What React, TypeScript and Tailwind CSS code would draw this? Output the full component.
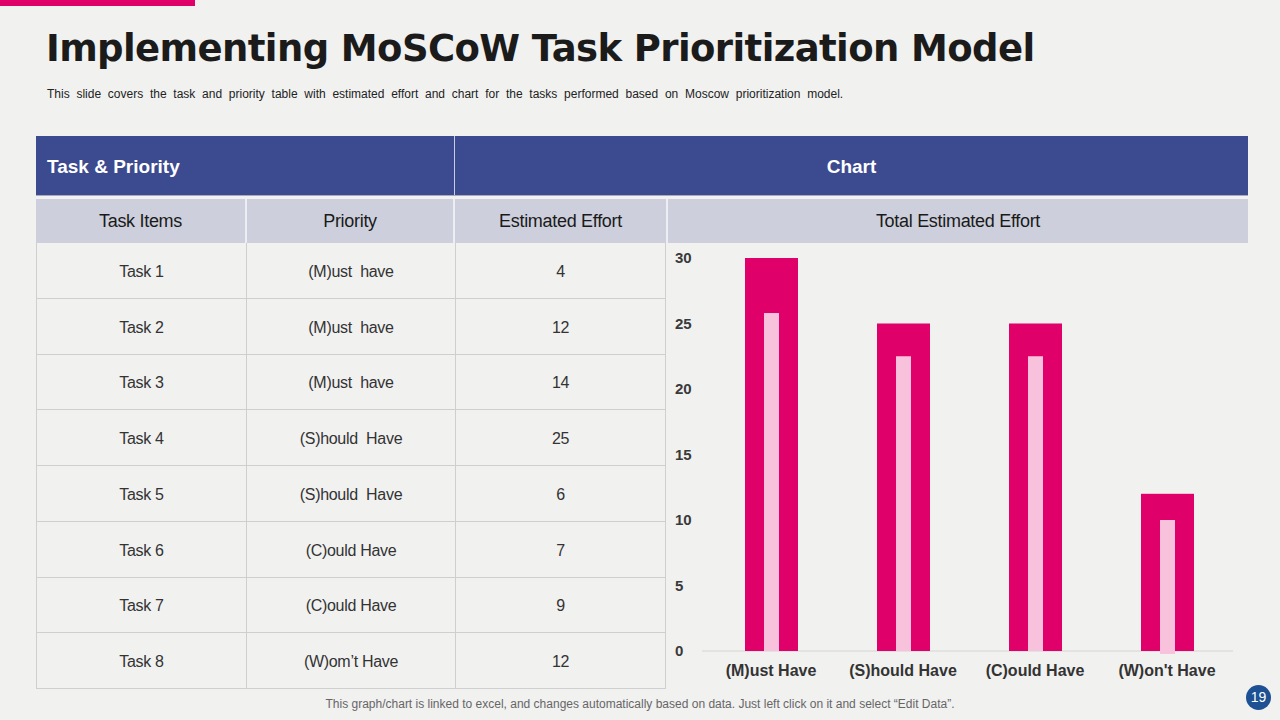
import React from 'react';

const rows = [
  { task: 'Task 1', priority: '(M)ust  have', effort: '4' },
  { task: 'Task 2', priority: '(M)ust  have', effort: '12' },
  { task: 'Task 3', priority: '(M)ust  have', effort: '14' },
  { task: 'Task 4', priority: '(S)hould  Have', effort: '25' },
  { task: 'Task 5', priority: '(S)hould  Have', effort: '6' },
  { task: 'Task 6', priority: '(C)ould Have', effort: '7' },
  { task: 'Task 7', priority: '(C)ould Have', effort: '9' },
  { task: 'Task 8', priority: '(W)om’t Have', effort: '12' },
];

// outer = total, inner = lighter series
const bars = [
  { label: '(M)ust Have', outer: 30, inner: 25.8 },
  { label: '(S)hould Have', outer: 25, inner: 22.5 },
  { label: '(C)ould Have', outer: 25, inner: 22.5 },
  { label: "(W)on't Have", outer: 12, inner: 10 },
];

function Chart() {
  // chart cell origin is x=668, y=243
  const y0 = 408; // baseline (651 - 243)
  const unit = 13.1;
  const ticks = [30, 25, 20, 15, 10, 5, 0];
  return (
    <svg width="580" height="447" className="block">
      {ticks.map((t) => (
        <text
          key={t}
          x={7}
          y={y0 - t * unit + 5}
          fontFamily="Liberation Sans, Arial, sans-serif"
          fontWeight="bold"
          fontSize="15"
          fill="#3a3a3a"
        >
          {t}
        </text>
      ))}
      <line x1={34} y1={y0} x2={565} y2={y0} stroke="#d4d4d4" strokeWidth="1" />
      {bars.map((b, i) => {
        const cx = 103 + i * 132;
        const oh = b.outer * unit;
        const ih = b.inner * unit;
        return (
          <g key={b.label}>
            <rect x={cx - 26} y={y0 - oh} width={53} height={oh} fill="#df0069" />
            <rect
              x={cx - 7}
              y={y0 - ih}
              width={15}
              height={ih + (i === 3 ? 3 : 0)}
              fill="#f8c2dd"
            />
            <text
              x={cx}
              y={y0 + 25}
              textAnchor="middle"
              fontFamily="Liberation Sans, Arial, sans-serif"
              fontWeight="bold"
              fontSize="16"
              fill="#333"
            >
              {b.label}
            </text>
          </g>
        );
      })}
    </svg>
  );
}

export default function App() {
  return (
    <div
      className="relative w-[1280px] h-[720px] overflow-hidden bg-[#f1f1f0]"
      style={{ fontFamily: '"Liberation Sans", Arial, sans-serif' }}
    >
      <div className="h-[6px] w-[195px] bg-[#df0069]" />

      {/* Title */}
      <h1
        className="ml-[46px] mt-[20px] text-[37px] leading-[46px] font-bold text-[#1b1b1b] tracking-[-0.6px]"
        style={{ fontFamily: '"DejaVu Sans", sans-serif' }}
      >
        Implementing MoSCoW Task Prioritization Model
      </h1>
      <p className="ml-[47px] mt-[15px] text-[12px] leading-[14px] text-[#222] [word-spacing:3.4px]">
        This slide covers the task and priority table with estimated effort and chart for the tasks performed based on Moscow prioritization model.
      </p>

      {/* Table */}
      <div className="ml-[36px] mt-[35px] w-[1212px]">
        <div className="flex h-[59px] bg-[#3c4a90] shadow-[0_1px_0_#aab]">
          <div className="w-[419px] flex items-center pl-[11px] pt-[4px] border-r border-[#c9cde0] text-white text-[19px] font-bold">
            Task &amp; Priority
          </div>
          <div className="flex-1 flex items-center justify-center pt-[4px] text-white text-[19px] font-bold">
            Chart
          </div>
        </div>

        <div className="flex h-[44px] mt-[4px] bg-[#cdd0dc] text-[18px] text-[#1a1a1a] tracking-[-0.3px]">
          <div className="w-[211px] flex items-center justify-center border-r-2 border-[#eceef3]">Task Items</div>
          <div className="w-[208px] flex items-center justify-center border-r-2 border-[#eceef3]">Priority</div>
          <div className="w-[213px] flex items-center justify-center border-r-2 border-[#eceef3]">Estimated Effort</div>
          <div className="flex-1 flex items-center justify-center">Total Estimated Effort</div>
        </div>

        <div className="flex h-[446px]">
          <div className="w-[630px] flex flex-col border-l border-[#cfcfcf]">
            {rows.map((r) => (
              <div
                key={r.task}
                className="flex-1 flex border-b border-[#cfcfcf] text-[16px] text-[#333] tracking-[-0.3px]"
              >
                <div className="w-[210px] flex items-center justify-center pt-[3px] border-r border-[#cfcfcf]">{r.task}</div>
                <div className="w-[209px] flex items-center justify-center pt-[3px] border-r border-[#cfcfcf] whitespace-pre">{r.priority}</div>
                <div className="w-[210px] flex items-center justify-center pt-[3px] border-r border-[#cfcfcf]">{r.effort}</div>
              </div>
            ))}
          </div>
          <div className="flex-1 pl-[2px]">
            <Chart />
          </div>
        </div>
      </div>

      {/* Footer note */}
      <p className="absolute left-0 right-0 bottom-[7px] text-center text-[12px] text-[#666]">
        This graph/chart is linked to excel,  and changes automatically based on data. Just left click on it and select “Edit Data”.
      </p>
      <div className="absolute right-[9px] bottom-[10px] w-[25px] h-[25px] rounded-full bg-[#1d5193] flex items-center justify-center text-white text-[14px]">
        19
      </div>
    </div>
  );
}
